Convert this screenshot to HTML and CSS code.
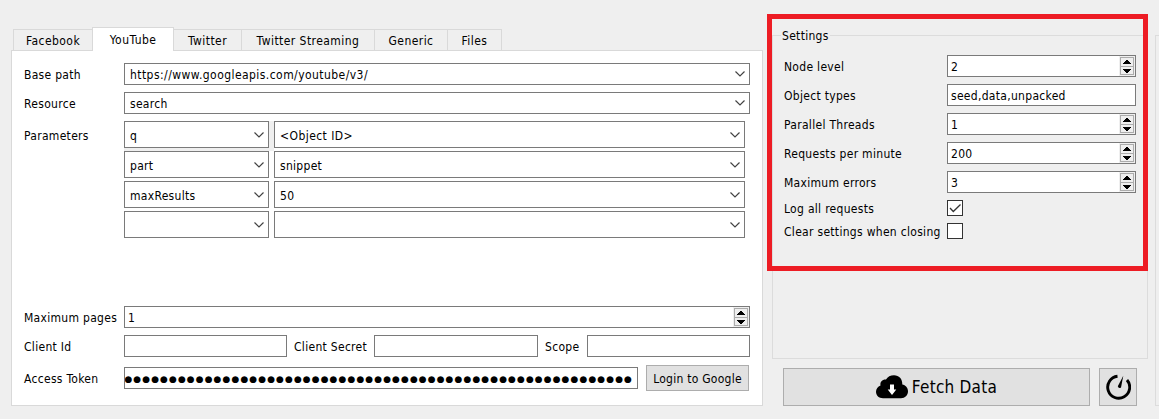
FILE: index.html
```
<!DOCTYPE html>
<html lang="en">
<head>
<meta charset="utf-8">
<title>Fetch settings</title>
<link rel="stylesheet" href="styles.css">
</head>
<body>
<svg class="defs" width="0" height="0">
  <symbol id="chev" viewBox="0 0 10 6"><path d="M.5 .5L5 5L9.500 .5" fill="none" stroke="#444" stroke-width="1.2"/></symbol>
  <symbol id="up" viewBox="0 0 8 4"><path d="M3 0h2v1h1v1h1v1h1v1H0V3h1V2h1V1h1z"/></symbol>
  <symbol id="down" viewBox="0 0 8 4"><path d="M0 0h8v1H7v1H6v1H5v1H3V3H2V2H1V1H0z"/></symbol>
</svg>
<main class="window">
  <section class="api">
    <nav class="tabs">
      <span class="tab t-facebook">Facebook</span>
      <span class="tab active t-youtube">YouTube</span>
      <span class="tab t-twitter">Twitter</span>
      <span class="tab t-streaming">Twitter Streaming</span>
      <span class="tab t-generic">Generic</span>
      <span class="tab t-files">Files</span>
    </nav>
    <div class="panel">
      <div class="row"><label>Base path</label><div class="field combo"><span class="url">https://www.googleapis.com/youtube/v3/</span><svg class="chev"><use href="#chev"/></svg></div></div>
      <div class="row"><label>Resource</label><div class="field combo"><span>search</span><svg class="chev"><use href="#chev"/></svg></div></div>
      <div class="row params">
        <label>Parameters</label>
        <div class="grid">
          <div class="field combo"><span>q</span><svg class="chev"><use href="#chev"/></svg></div>
          <div class="field combo"><span class="object">&lt;Object ID&gt;</span><svg class="chev"><use href="#chev"/></svg></div>
          <div class="field combo"><span>part</span><svg class="chev"><use href="#chev"/></svg></div>
          <div class="field combo"><span>snippet</span><svg class="chev"><use href="#chev"/></svg></div>
          <div class="field combo"><span>maxResults</span><svg class="chev"><use href="#chev"/></svg></div>
          <div class="field combo"><span>50</span><svg class="chev"><use href="#chev"/></svg></div>
          <div class="field combo"><span></span><svg class="chev"><use href="#chev"/></svg></div>
          <div class="field combo"><span></span><svg class="chev"><use href="#chev"/></svg></div>
        </div>
      </div>
      <div class="row"><label>Maximum pages</label><div class="field spin"><span>1</span><div class="steps"><i><svg><use href="#up"/></svg></i><i><svg><use href="#down"/></svg></i></div></div></div>
      <div class="row"><label>Client Id</label><div class="field c1"></div><label class="secret">Client Secret</label><div class="field c2"></div><label class="scope">Scope</label><div class="field c3"></div></div>
      <div class="row token"><label>Access Token</label><div class="field dots"><span>●●●●●●●●●●●●●●●●●●●●●●●●●●●●●●●●●●●●●●●●●●●●●●●●●●●●●●●●●●●●●●●●</span></div><button class="login">Login to Google</button></div>
    </div>
  </section>
  <section class="side">
    <div class="group">
      <h2>Settings</h2>
      <div class="row"><label>Node level</label><div class="field spin"><span>2</span><div class="steps"><i><svg><use href="#up"/></svg></i><i><svg><use href="#down"/></svg></i></div></div></div>
      <div class="row"><label>Object types</label><div class="field"><span>seed,data,unpacked</span></div></div>
      <div class="row"><label>Parallel Threads</label><div class="field spin"><span>1</span><div class="steps"><i><svg><use href="#up"/></svg></i><i><svg><use href="#down"/></svg></i></div></div></div>
      <div class="row"><label>Requests per minute</label><div class="field spin"><span>200</span><div class="steps"><i><svg><use href="#up"/></svg></i><i><svg><use href="#down"/></svg></i></div></div></div>
      <div class="row"><label>Maximum errors</label><div class="field spin"><span>3</span><div class="steps"><i><svg><use href="#up"/></svg></i><i><svg><use href="#down"/></svg></i></div></div></div>
      <div class="row check"><label>Log all requests</label><div class="box"><svg width="14" height="14" viewBox="0 0 14 14"><path d="M2 7L5.300 10.500L12.500 3.500" fill="none" stroke="#333" stroke-width="1.300"/></svg></div></div>
      <div class="row check"><label>Clear settings when closing</label><div class="box"></div></div>
    </div>
    <div class="actions">
      <button class="fetch">
        <svg width="32" height="24" viewBox="0 0 32 24"><path d="M7 23.300C3 23.300 0 20.500 0 16.800C0 13.800 1.800 11.500 4.500 10.500C3.800 7 6.500 4.300 10 4.600C11.500 1.800 14.500 .3 18 .3C23 .3 26.500 4 26.300 9.500C29.500 10 32 12.700 32 16.300C32 20.300 29 23.300 25 23.300Z"/><path d="M14 9.500h4v5h2.300L16 20l-4.300-5.500H14z" fill="#fff"/></svg>
        <span>Fetch Data</span>
      </button>
      <button class="timer"><svg width="26" height="26" viewBox="0 0 26 26"><path d="M12.500 2.300A11 11 0 1 0 22 6" fill="none" stroke="#000" stroke-width="2.900"/><path d="M18.300 1.800L16 13.500Q13.500 15 12.800 12.300Z"/></svg></button>
    </div>
  </section>
  <aside class="next"></aside>
  <div class="highlight"></div>
</main>
</body>
</html>
```
FILE: styles.css
```
* { box-sizing: border-box; }
body { margin: 0; background: #efefef; color: #000; font: 12px/16px "DejaVu Sans Condensed", "DejaVu Sans", sans-serif; font-stretch: condensed; letter-spacing: .3px; }
.defs { display: block; height: 0; }
.window { position: relative; width: 1159px; height: 419px; display: flex; overflow: hidden; }
.api { flex: none; width: 752px; margin: 27px 0 0 11px; }
.tabs { position: relative; display: flex; align-items: flex-end; height: 24px; padding-left: 2px; white-space: nowrap; letter-spacing: .45px; }
.tab { height: 22px; border: 1px solid #d9d9d9; border-left: 0; text-align: center; line-height: 22px; }
.t-facebook { width: 79px; border-left: 1px solid #d9d9d9; border-right: 0; }
.t-youtube { width: 82px; }
.t-twitter { width: 68px; }
.t-streaming { width: 133px; }
.t-generic { width: 73px; }
.t-files { width: 54px; }
.tab.active { height: 24px; background: #fff; border-left: 1px solid #d9d9d9; border-bottom: 0; line-height: 24px; }
.panel { height: 356px; margin-top: -1px; border: 1px solid #d9d9d9; background: #fff; padding: 12px 12px 0; }
.row { display: flex; align-items: center; height: 22px; margin-bottom: 7px; white-space: nowrap; }
.row label { flex: none; width: 100px; padding-top: 2px; }
.field { flex: 1; display: flex; align-items: center; height: 22px; min-width: 0; border: 1px solid #7a7a7a; background: #fff; }
.field > span { padding-top: 2px; }
.url, .object { letter-spacing: .44px; }
.combo { justify-content: space-between; padding: 0 4px 0 5px; }
.chev { width: 10px; height: 6px; flex: none; }
.params { height: 117px; align-items: flex-start; margin-bottom: 68px; }
.row.params label { padding-top: 0; line-height: 30px; }
.grid { display: grid; grid-template-columns: 145px 471px; grid-auto-rows: 27px; gap: 3px 5px; background: linear-gradient(90deg, #efefef 150px, #fff 150px) no-repeat 0 0 / 100% 30px; }
.grid .field { height: 27px; }
.spin { justify-content: space-between; padding: 0 0 0 3px; }
.steps { width: 16px; height: 20px; padding: 1px; background: #efefef; display: flex; flex-direction: column; }
.steps i { width: 14px; height: 10px; border: 1px solid #acacac; display: flex; align-items: center; justify-content: center; }
.steps i + i { height: 9px; margin-top: -1px; }
.steps svg { width: 8px; height: 4px; }
.c1, .c3 { flex: none; width: 163px; }
.c2 { flex: none; width: 164px; }
.row .secret { width: 87px; padding-left: 7px; }
.row .scope { width: 49px; padding-left: 7px; }
.token { height: 26px; margin-top: 8px; }
.dots { flex: none; width: 514px; justify-content: flex-end; overflow: hidden; padding-right: 4px; font: 9px/16px "DejaVu Sans"; }
.dots span { letter-spacing: 1.07px; }
button { padding: 0; border: 1px solid #adadad; background: #e1e1e1; color: #000; font: inherit; letter-spacing: .25px; }
.login { width: 103px; height: 26px; padding-top: 2px; margin-left: 8px; }
.side { flex: none; width: 376px; margin: 35px 0 0 9px; }
.group { height: 324px; border: 1px solid #dcdcdc; padding: 0 11px; }
.group h2 { width: 49px; height: 16px; margin: -8px 0 11px -3px; padding-left: 1px; background: #efefef; font-size: 12px; font-weight: 400; line-height: 16px; white-space: nowrap; }
.group .row label { width: 163px; }
.group .field { padding-left: 3px; }
.group .row.check { height: 16px; }
.box { width: 16px; height: 16px; border: 1px solid #333; background: #fff; }
.box svg { display: block; }
.actions { display: flex; gap: 9px; margin: 9px 0 0 11px; }
.fetch { display: flex; align-items: center; justify-content: center; gap: 4px; width: 307px; height: 38px; font-size: 17px; }
.timer { display: flex; align-items: center; justify-content: center; width: 38px; height: 38px; }
.next { flex: none; width: 20px; height: 371px; margin: 35px 0 0 7px; border: 1px solid #dcdcdc; }
.highlight { position: absolute; left: 767px; top: 14px; width: 381px; height: 257px; border: 5px solid #ed1c24; }
```
